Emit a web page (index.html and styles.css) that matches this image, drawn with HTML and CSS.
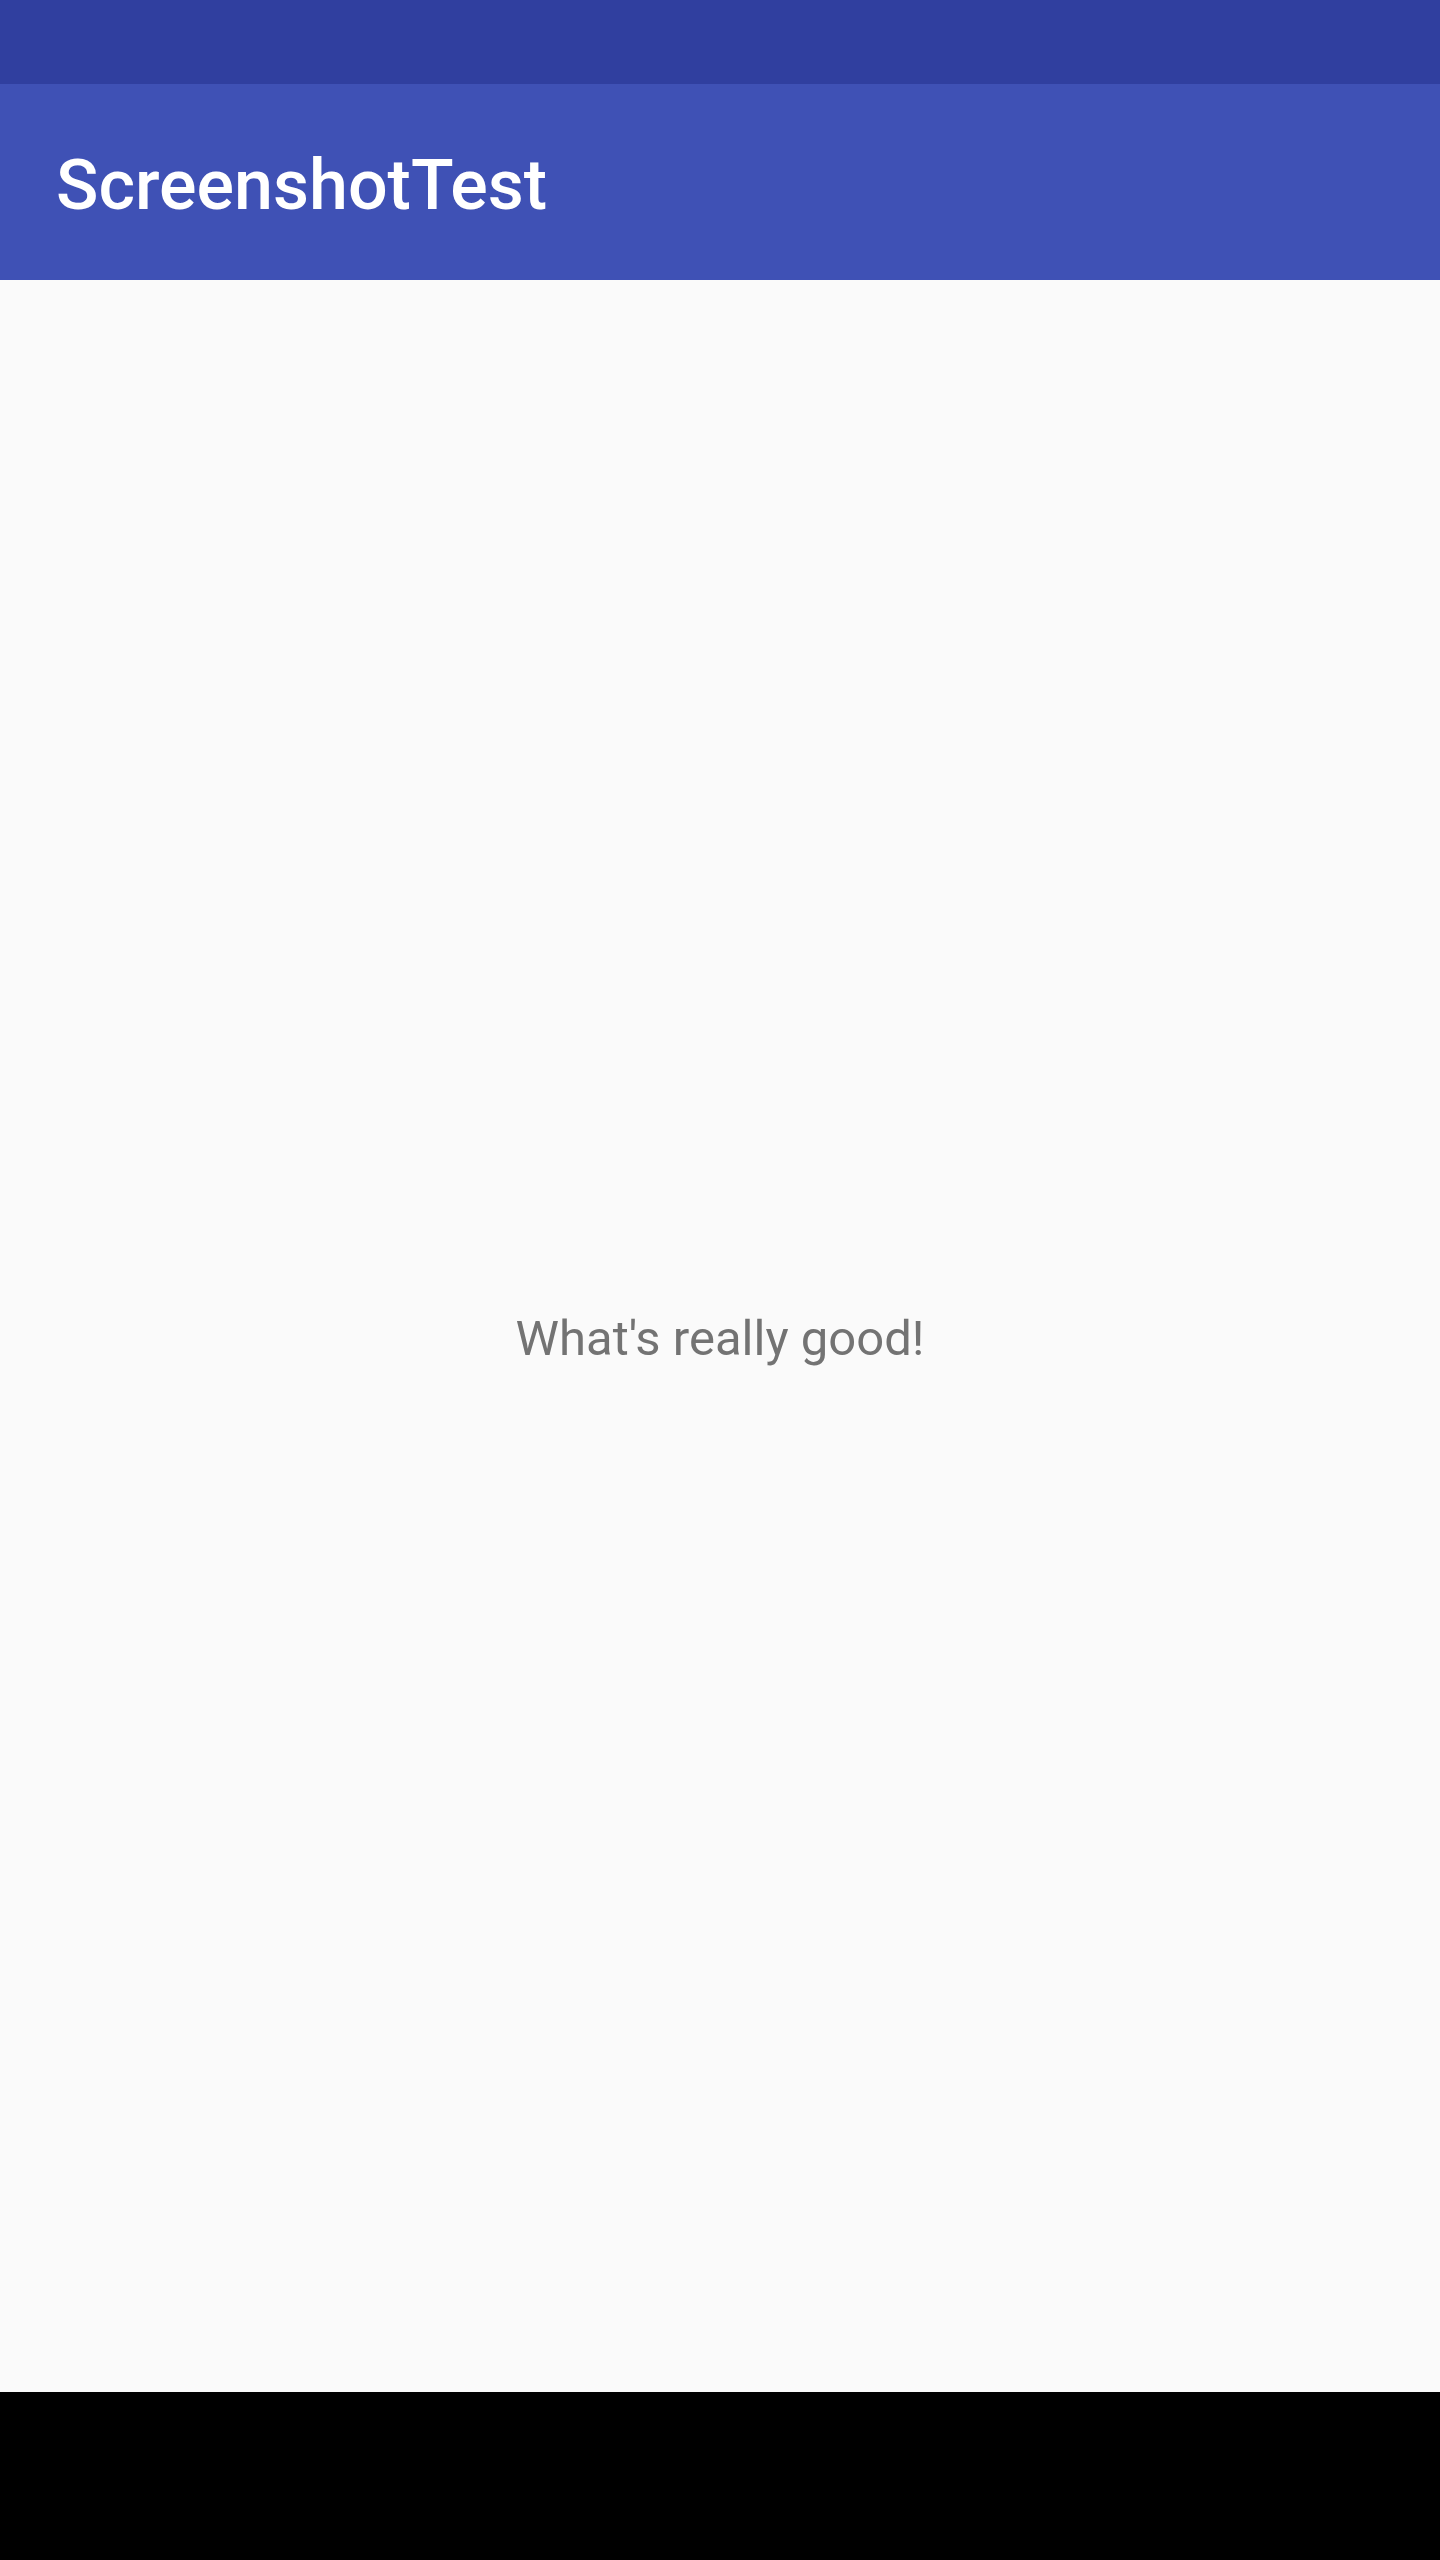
FILE: index.html
```html
<!DOCTYPE html>
<html>
<head>
<meta charset="utf-8">
<link rel="stylesheet" href="styles.css">
</head>
<body>
<div class="screen">
  <div class="status-bar"></div>
  <header class="toolbar">
    <h1 class="title">ScreenshotTest</h1>
  </header>
  <main class="content">
    <p class="message">What's really good!</p>
  </main>
  <div class="nav-bar"></div>
</div>
</body>
</html>
```
FILE: styles.css
```css
html, body {
  margin: 0;
  padding: 0;
}
body {
  font-family: Roboto, "Noto Sans", sans-serif;
  background: #fafafa;
}
.screen {
  width: 1440px;
  height: 2560px;
  display: flex;
  flex-direction: column;
}
.status-bar {
  height: 84px;
  background: #303f9f;
  flex: none;
}
.toolbar {
  height: 196px;
  background: #3f51b5;
  flex: none;
  display: flex;
  align-items: center;
  padding-left: 56px;
  padding-top: 6px;
  box-sizing: border-box;
}
.title {
  margin: 0;
  color: #ffffff;
  font-size: 70px;
  font-weight: 500;
  line-height: 1;
}
.content {
  flex: 1;
  display: flex;
  align-items: center;
  justify-content: center;
  background: #fafafa;
}
.message {
  margin: 0;
  padding-top: 4px;
  font-size: 49px;
  color: #737373;
  font-weight: 400;
}
.nav-bar {
  height: 168px;
  background: #000000;
  flex: none;
}
```
